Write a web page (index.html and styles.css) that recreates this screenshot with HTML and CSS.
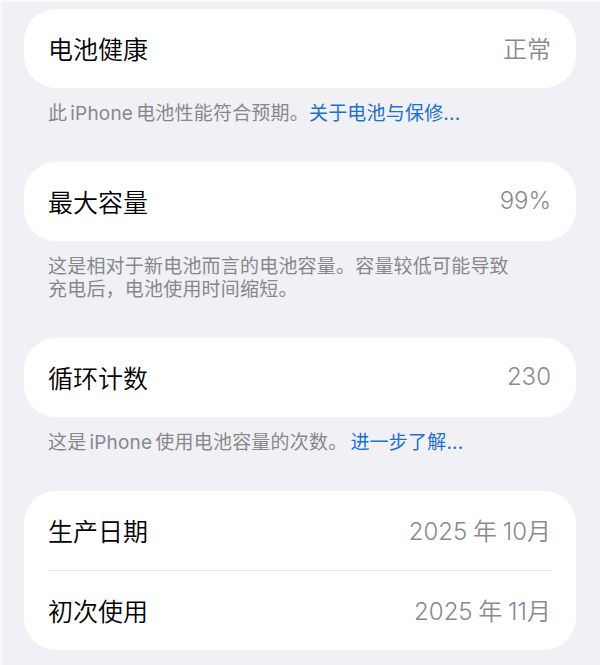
FILE: index.html
```html
<!DOCTYPE html>
<html lang="zh-CN">
<head>
<meta charset="utf-8">
<title>电池健康</title>
<link rel="stylesheet" href="styles.css">
</head>
<body>
<div class="screen">
  <section class="group">
    <div class="card">
      <div class="row"><span class="label">电池健康</span><span class="value">正常</span></div>
    </div>
    <p class="footer">此 iPhone 电池性能符合预期。<a class="link">关于电池与保修...</a></p>
  </section>
  <section class="group">
    <div class="card">
      <div class="row"><span class="label">最大容量</span><span class="value">99%</span></div>
    </div>
    <p class="footer">这是相对于新电池而言的电池容量。容量较低可能导致<br>充电后，电池使用时间缩短。</p>
  </section>
  <section class="group">
    <div class="card">
      <div class="row"><span class="label">循环计数</span><span class="value">230</span></div>
    </div>
    <p class="footer">这是 iPhone 使用电池容量的次数。 <a class="link">进一步了解...</a></p>
  </section>
  <section class="group">
    <div class="card">
      <div class="row"><span class="label">生产日期</span><span class="value">2025 年 10月</span></div>
      <div class="divider"></div>
      <div class="row"><span class="label">初次使用</span><span class="value">2025 年 11月</span></div>
    </div>
  </section>
</div>
</body>
</html>
```
FILE: styles.css
```css
html, body {
  margin: 0;
  padding: 0;
  background: #f0f0f5;
}
body {
  font-family: "Inter", "Noto Sans CJK SC", sans-serif;
  -webkit-font-smoothing: antialiased;
}
.screen {
  width: 600px;
  height: 665px;
  box-sizing: border-box;
  padding: 7px 24px 0 22px;
  border-left: 2px solid #fafafc;
  border-top: 2px solid #fafafc;
  overflow: hidden;
}
.group {
  display: flex;
  flex-direction: column;
}
.card {
  background: #ffffff;
  border-radius: 32px;
  display: flex;
  flex-direction: column;
}
.row {
  box-sizing: border-box;
  height: 79px;
  display: flex;
  align-items: center;
  justify-content: space-between;
  padding: 0 25px 2px 24px;
}
.label {
  font-size: 25px;
  font-weight: 350;
  color: #000000;
}
.value {
  font-size: 24px;
  font-weight: 350;
  color: #8a8a8e;
  word-spacing: -1px;
}
.divider {
  height: 1px;
  background: #e4e4e8;
  margin: 0 24px;
}
.footer {
  margin: 0;
  padding: 14px 24px 37px 24px;
  font-size: 19px;
  line-height: 23px;
  letter-spacing: 0.2px;
  word-spacing: -2.5px;
  color: #88888c;
}
.link {
  color: #1d6fd3;
}
```
